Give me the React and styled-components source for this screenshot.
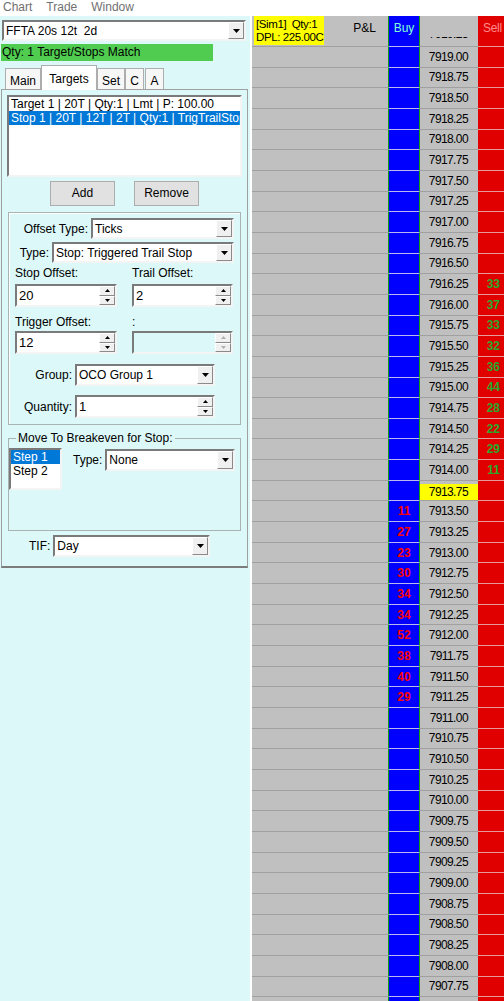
import React from 'react';
import styled, { createGlobalStyle, css } from 'styled-components';

const CYAN = '#dcf8f8';

const GlobalStyle = createGlobalStyle`
  html, body {
    margin: 0;
    padding: 0;
    background: #fff;
  }
  body {
    font-family: "Liberation Sans", Arial, sans-serif;
    font-size: 12px;
    color: #000;
  }
  * {
    box-sizing: border-box;
  }
`;

const sunken = css`
  border-style: solid;
  border-width: 2px;
  border-color: #7a7a7a #f4f4f4 #f4f4f4 #7a7a7a;
`;

const raised = css`
  border-style: solid;
  border-width: 1px;
  border-color: #fff #8a8a8a #8a8a8a #fff;
`;

const Screen = styled.div`
  width: 504px;
  height: 1001px;
  overflow: hidden;
  display: flex;
  flex-direction: column;
`;

const MenuBar = styled.div`
  height: 16px;
  flex: none;
  display: flex;
  gap: 14px;
  padding-left: 3px;
  line-height: 15px;
  color: #707070;
  background: #fff;
`;

const Workspace = styled.div`
  flex: 1;
  min-height: 0;
  display: flex;
  background: #fff;
`;

/* ---------- order panel ---------- */

const OrderPanel = styled.div`
  width: 250px;
  flex: none;
  background: ${CYAN};
  padding-top: 4px;
`;

const ComboBox = styled.div`
  ${sunken}
  display: flex;
  flex: none;
  width: ${p => p.$w}px;
  height: ${p => p.$h || 21}px;
  margin-left: ${p => p.$ml || 0}px;
  background: #fff;
`;

const ComboText = styled.span`
  flex: 1;
  padding-left: 2px;
  display: flex;
  align-items: center;
  white-space: pre;
  overflow: hidden;
`;

const DropButton = styled.span`
  ${raised}
  width: 16px;
  flex: none;
  background: #f0f0f0;
  display: flex;
  align-items: center;
  justify-content: center;
`;

const Arrow = ({ up, disabled }) => (
  <svg width="7" height="4" viewBox="0 0 7 4">
    <polygon
      points={up ? '3.5,0 7,4 0,4' : '0,0 7,0 3.5,4'}
      fill={disabled ? '#b0b0b0' : '#000'}
    />
  </svg>
);

const SmallArrow = ({ up, disabled }) => (
  <svg width="5" height="3" viewBox="0 0 5 3">
    <polygon
      points={up ? '2.5,0 5,3 0,3' : '0,0 5,0 2.5,3'}
      fill={disabled ? '#b0b0b0' : '#000'}
    />
  </svg>
);

const Combo = ({ value, w, h, ml }) => (
  <ComboBox $w={w} $h={h} $ml={ml}>
    <ComboText>{value}</ComboText>
    <DropButton>
      <Arrow />
    </DropButton>
  </ComboBox>
);

const SpinBox = styled.div`
  ${sunken}
  display: flex;
  flex: none;
  width: ${p => p.$w}px;
  height: 23px;
  background: ${p => (p.$disabled ? CYAN : '#fff')};
`;

const SpinValue = styled.span`
  flex: 1;
  padding-left: 2px;
  font-size: 13px;
  display: flex;
  align-items: center;
`;

const SpinButtons = styled.span`
  width: 16px;
  flex: none;
  display: flex;
  flex-direction: column;
`;

const SpinButton = styled.span`
  ${raised}
  flex: 1;
  background: #f0f0f0;
  display: flex;
  align-items: center;
  justify-content: center;
`;

const Spinner = ({ value, w, disabled }) => (
  <SpinBox $w={w} $disabled={disabled}>
    <SpinValue>{value}</SpinValue>
    <SpinButtons>
      <SpinButton>
        <SmallArrow up disabled={disabled} />
      </SpinButton>
      <SpinButton>
        <SmallArrow disabled={disabled} />
      </SpinButton>
    </SpinButtons>
  </SpinBox>
);

const MatchBar = styled.div`
  width: 212px;
  height: 17px;
  margin: 3px 0 0 1px;
  padding-left: 1px;
  line-height: 17px;
  background: #50cc50;
  white-space: nowrap;
`;

const TabStrip = styled.div`
  height: 24px;
  margin-top: 4px;
  padding-left: 5px;
  display: flex;
  align-items: flex-end;
`;

const Tab = styled.div`
  width: ${p => p.$w}px;
  height: ${p => (p.$active ? 25 : 21)}px;
  margin-left: ${p => p.$gap || 0}px;
  margin-bottom: ${p => (p.$active ? -1 : 0)}px;
  padding-top: ${p => (p.$active ? 6 : 5)}px;
  line-height: 14px;
  text-align: center;
  border: 1px solid #adadad;
  border-bottom: none;
  background: ${p => (p.$active ? '#fff' : '#f7f7f7')};
  position: relative;
  z-index: ${p => (p.$active ? 1 : 0)};
`;

const TabPage = styled.div`
  width: 247px;
  height: 479px;
  margin-left: 1px;
  padding: 5px 0 0 5px;
  border: 1px solid #a0a0a0;
  border-bottom: 2px solid #7c7c7c;
  background: ${CYAN};
`;

const ListBox = styled.div`
  ${sunken}
  width: 235px;
  height: 82px;
  background: #fff;
  overflow: hidden;
`;

const ListItem = styled.div`
  height: 14px;
  line-height: 14px;
  padding-left: 2px;
  white-space: nowrap;
  color: ${p => (p.$selected ? '#fff' : '#000')};
  background: ${p => (p.$selected ? '#0078d7' : 'transparent')};
`;

const ButtonRow = styled.div`
  display: flex;
  gap: 19px;
  margin-top: 4px;
  padding-left: 43px;
`;

const PushButton = styled.div`
  width: 65px;
  height: 25px;
  line-height: 23px;
  text-align: center;
  border: 1px solid #adadad;
  background: #e1e1e1;
`;

const GroupBox = styled.div`
  width: 233px;
  height: 213px;
  margin: 6px 0 0 1px;
  padding-top: 5px;
  border: 1px solid #a8b4b4;
  box-shadow: inset 1px 1px 0 #fff;
`;

const FieldRow = styled.div`
  display: flex;
  align-items: center;
  justify-content: ${p => (p.$start ? 'flex-start' : 'flex-end')};
  gap: 3px;
  margin-top: ${p => p.$mt || 0}px;
  padding-right: ${p => p.$pr || 0}px;
  padding-left: ${p => p.$pl || 0}px;
`;

const PairRow = styled.div`
  display: grid;
  grid-template-columns: 102px 101px;
  column-gap: 15px;
  margin-top: ${p => p.$mt || 0}px;
  padding-left: 6px;
`;

const Label = styled.span`
  line-height: 14px;
  white-space: nowrap;
`;

const Breakeven = styled.fieldset`
  width: 233px;
  margin: 6px 0 0 1px;
  padding: 0;
  min-width: 0;
  border: 1px solid #a8b4b4;
`;

const Legend = styled.legend`
  margin-left: 7px;
  padding: 0 2px;
  line-height: 14px;
`;

const BreakevenBody = styled.div`
  height: 85px;
  display: flex;
  align-items: flex-start;
`;

const StepList = styled.div`
  ${sunken}
  width: 53px;
  height: 42px;
  margin-top: 3px;
  background: #fff;
`;

const StepType = styled.div`
  display: flex;
  align-items: center;
  gap: 3px;
  margin: 4px 0 0 11px;
`;

/* ---------- price ladder ---------- */

const COLUMNS = '136px 32px 58px 1fr';
const ROW_H = 20.667;

const Ladder = styled.div`
  flex: 1;
  min-width: 0;
  margin-left: 2px;
  background: #c0c0c0;
  overflow: hidden;
`;

const LadderHead = styled.div`
  display: grid;
  grid-template-columns: ${COLUMNS};
  height: 30px;
`;

const AccountCell = styled.div`
  display: flex;
  align-items: flex-start;
`;

const AccountTag = styled.div`
  width: 70px;
  height: 29px;
  margin-left: 2px;
  padding: 2px 0 0 2px;
  font-size: 11.5px;
  letter-spacing: -0.4px;
  line-height: 13px;
  background: #ffff00;
  white-space: pre;
  overflow: hidden;
`;

const PnlTitle = styled.span`
  margin: 5px 12px 0 auto;
  line-height: 14px;
`;

const BuyHead = styled.div`
  background: #0000ff;
  border-left: 1px solid #10a010;
  border-right: 1px solid #10a010;
  color: #80ffd8;
  text-align: center;
  padding-top: 5px;
  line-height: 14px;
`;

const PriceHead = styled.div`
  padding-top: 21px;
`;

const PriceClip = styled.div`
  height: 3px;
  overflow: hidden;
  text-align: right;
  padding-right: 10px;
  letter-spacing: -0.6px;
`;

const ClipText = styled.div`
  margin-top: -10px;
  line-height: 14px;
`;

const SellHead = styled.div`
  background: #e00000;
  color: #ff8c8c;
  padding: 5px 0 0 5px;
  line-height: 14px;
  letter-spacing: -0.3px;
  white-space: nowrap;
`;

const LadderRow = styled.div`
  display: grid;
  grid-template-columns: ${COLUMNS};
  height: ${ROW_H}px;
`;

const Cell = styled.div`
  border-top: 1px solid #a0a0a0;
`;

const BuyCell = styled.div`
  border-top: 1px solid #b8b8f0;
  border-left: 1px solid #10a010;
  border-right: 1px solid #10a010;
  background: #0000ff;
  color: #ff0000;
  font-weight: bold;
  display: flex;
  align-items: center;
  justify-content: center;
`;

const PriceCell = styled.div`
  border-top: 1px solid #a0a0a0;
  display: flex;
  flex-direction: column;
`;

const PriceText = styled.div`
  flex: 1;
  margin-top: ${p => (p.$last ? 3 : 0)}px;
  background: ${p => (p.$last ? '#ffff00' : 'transparent')};
  display: flex;
  align-items: center;
  justify-content: flex-end;
  padding-right: 10px;
  letter-spacing: -0.6px;
`;

const SellCell = styled.div`
  border-top: 1px solid #e89a9a;
  background: #e00000;
  color: #2aa82a;
  font-weight: bold;
  display: flex;
  align-items: center;
  justify-content: flex-end;
  padding-right: 4px;
`;

const sellSize = {
  '7916.25': 33, '7916.00': 37, '7915.75': 33, '7915.50': 32, '7915.25': 36,
  '7915.00': 44, '7914.75': 28, '7914.50': 22, '7914.25': 29, '7914.00': 11,
};

const buySize = {
  '7913.50': 11, '7913.25': 27, '7913.00': 23, '7912.75': 30, '7912.50': 34,
  '7912.25': 34, '7912.00': 52, '7911.75': 38, '7911.50': 40, '7911.25': 29,
};

const LAST_PRICE = '7913.75';

const prices = Array.from({ length: 47 }, (_, i) => (7919 - i * 0.25).toFixed(2));

const tabs = [
  { label: 'Main', w: 36 },
  { label: 'Targets', w: 56, active: true },
  { label: 'Set', w: 28 },
  { label: 'C', w: 19 },
  { label: 'A', w: 19, gap: 1 },
];

export default function App() {
  return (
    <Screen>
      <GlobalStyle />
      <MenuBar>
        <span>Chart</span>
        <span>Trade</span>
        <span>Window</span>
      </MenuBar>
      <Workspace>
        <OrderPanel>
          <Combo value="FFTA 20s 12t  2d" w={244} ml={2} />
          <MatchBar>Qty: 1 Target/Stops Match</MatchBar>
          <TabStrip>
            {tabs.map(t => (
              <Tab key={t.label} $w={t.w} $active={t.active} $gap={t.gap}>
                {t.label}
              </Tab>
            ))}
          </TabStrip>
          <TabPage>
            <ListBox>
              <ListItem>Target 1 | 20T | Qty:1 | Lmt | P: 100.00</ListItem>
              <ListItem $selected>Stop 1 | 20T | 12T | 2T | Qty:1 | TrigTrailStop</ListItem>
            </ListBox>
            <ButtonRow>
              <PushButton>Add</PushButton>
              <PushButton>Remove</PushButton>
            </ButtonRow>
            <GroupBox>
              <FieldRow $pr={6}>
                <Label>Offset Type:</Label>
                <Combo value="Ticks" w={143} />
              </FieldRow>
              <FieldRow $pr={6} $mt={3}>
                <Label>Type:</Label>
                <Combo value="Stop: Triggered Trail Stop" w={182} />
              </FieldRow>
              <PairRow $mt={3}>
                <Label>Stop Offset:</Label>
                <Label>Trail Offset:</Label>
              </PairRow>
              <PairRow $mt={4}>
                <Spinner value="20" w={102} />
                <Spinner value="2" w={101} />
              </PairRow>
              <PairRow $mt={8}>
                <Label>Trigger Offset:</Label>
                <Label>:</Label>
              </PairRow>
              <PairRow $mt={2}>
                <Spinner value="12" w={102} />
                <Spinner w={101} disabled />
              </PairRow>
              <FieldRow $pr={25} $mt={10}>
                <Label>Group:</Label>
                <Combo value="OCO Group 1" w={140} h={22} />
              </FieldRow>
              <FieldRow $pr={25} $mt={9}>
                <Label>Quantity:</Label>
                <Spinner value="1" w={140} />
              </FieldRow>
            </GroupBox>
            <Breakeven>
              <Legend>Move To Breakeven for Stop:</Legend>
              <BreakevenBody>
                <StepList>
                  <ListItem $selected>Step 1</ListItem>
                  <ListItem>Step 2</ListItem>
                </StepList>
                <StepType>
                  <Label>Type:</Label>
                  <Combo value="None" w={130} h={22} />
                </StepType>
              </BreakevenBody>
            </Breakeven>
            <FieldRow $start $pl={22} $mt={4}>
              <Label>TIF:</Label>
              <Combo value="Day" w={157} h={22} />
            </FieldRow>
          </TabPage>
        </OrderPanel>

        <Ladder>
          <LadderHead>
            <AccountCell>
              <AccountTag>{'[Sim1]  Qty:1\nDPL: 225.00C'}</AccountTag>
              <PnlTitle>P&amp;L</PnlTitle>
            </AccountCell>
            <BuyHead>Buy</BuyHead>
            <PriceHead>
              <PriceClip>
                <ClipText>7919.25</ClipText>
              </PriceClip>
            </PriceHead>
            <SellHead>Sell</SellHead>
          </LadderHead>
          {prices.map(price => (
            <LadderRow key={price}>
              <Cell />
              <BuyCell>{buySize[price]}</BuyCell>
              <PriceCell>
                <PriceText $last={price === LAST_PRICE}>{price}</PriceText>
              </PriceCell>
              <SellCell>{sellSize[price]}</SellCell>
            </LadderRow>
          ))}
        </Ladder>
      </Workspace>
    </Screen>
  );
}
